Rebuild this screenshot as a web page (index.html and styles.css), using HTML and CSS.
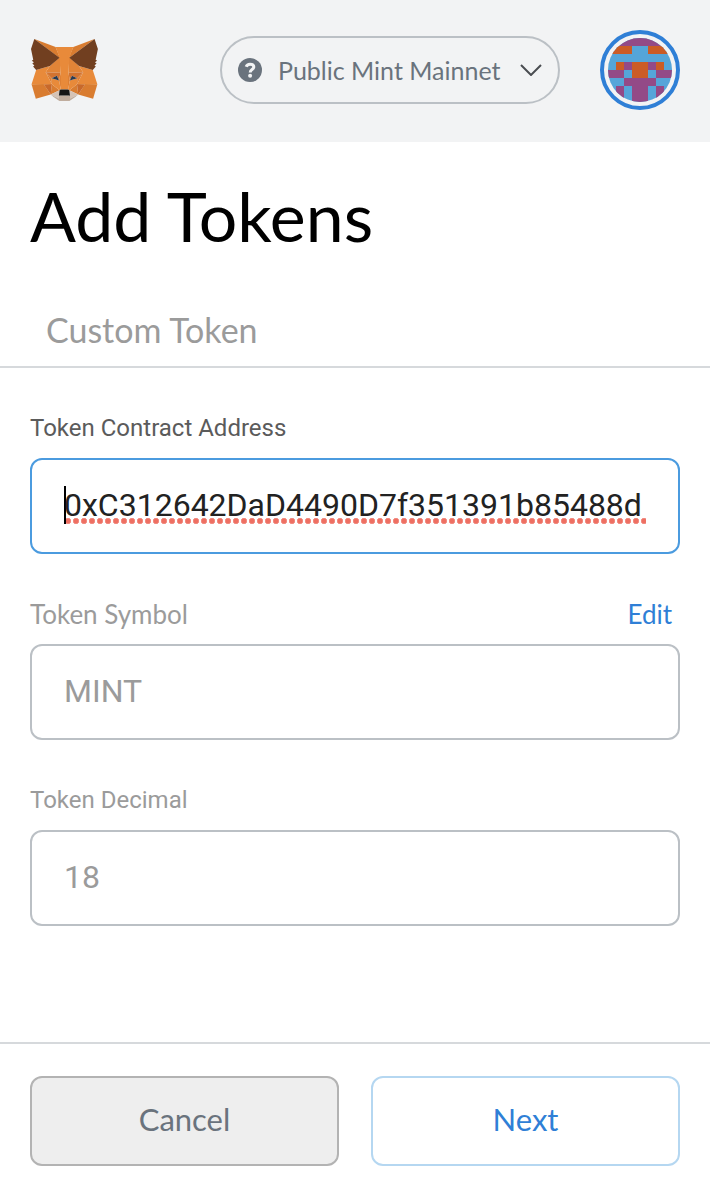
FILE: index.html
```html
<!DOCTYPE html>
<html lang="en">
<head>
  <meta charset="UTF-8">
  <meta name="viewport" content="width=device-width, initial-scale=1">
  <title>Add Tokens</title>
  <link rel="stylesheet" href="styles.css">
</head>
<body>

<!-- Header -->
<header class="app-header">
  <a class="logo" href="#" aria-label="Home">
    <svg viewBox="28 35.5 263 236.4" width="69" height="62">
      <polygon fill="#d97c30" points="274.1,35.5 174.6,109.4 193,65.8"/>
      <g fill="#d97c30">
        <polygon points="44.4,35.5 143.1,110.1 125.6,65.8"/>
        <polygon points="238.3,206.8 211.8,247.4 268.5,263 284.8,207.7"/>
        <polygon points="33.9,207.7 50.1,263 106.8,247.4 80.3,206.8"/>
        <polygon points="106.8,247.4 140.6,230.9 111.4,208.1"/>
        <polygon points="177.9,230.9 211.8,247.4 207.1,208.1"/>
      </g>
      <g fill="#e18437">
        <polygon points="103.6,138.2 87.8,162.1 144.1,164.6 142.1,104.1"/>
        <polygon points="214.9,138.2 175.9,103.4 174.6,164.6 230.8,162.1"/>
      </g>
      <g fill="#d5c3b6">
        <polygon points="211.8,247.4 177.9,230.9 180.6,253 180.3,262.3"/>
        <polygon points="106.8,247.4 138.3,262.3 138.1,253 140.6,230.9"/>
      </g>
      <g fill="#c8692b">
        <polygon points="106.8,247.4 111.6,206.8 80.3,207.7"/>
        <polygon points="207,206.8 211.8,247.4 238.3,207.7"/>
      </g>
      <g fill="#d27330">
        <polygon points="230.8,162.1 174.6,164.6 179.8,193.5 188.1,176.1 208.1,185.2"/>
        <polygon points="110.6,185.2 130.6,176.1 138.8,193.5 144.1,164.6 87.8,162.1"/>
      </g>
      <g fill="#dc7e33">
        <polygon points="87.8,162.1 111.4,208.1 110.6,185.2"/>
        <polygon points="208.1,185.2 207.1,208.1 230.8,162.1"/>
        <polygon points="144.1,164.6 138.8,193.5 145.4,227.6 146.9,182.7"/>
        <polygon points="174.6,164.6 171.9,182.6 173.1,227.6 179.8,193.5"/>
      </g>
      <g fill="#e88a3a">
        <polygon points="179.8,193.5 173.1,227.6 177.9,230.9 207.1,208.1 208.1,185.2"/>
        <polygon points="110.6,185.2 111.4,208.1 140.6,230.9 145.4,227.6 138.8,193.5"/>
        <polygon points="267.2,153.5 214.9,138.2 230.8,162.1 207.1,208.1 238.3,207.7 284.8,207.7"/>
        <polygon points="103.6,138.2 51.3,153.5 33.9,207.7 80.3,207.7 111.4,208.1 87.8,162.1"/>
        <polygon points="174.6,164.6 177.9,106.9 193.1,65.8 125.6,65.8 140.6,106.9 144.1,164.6 145.3,182.8 145.4,227.6 173.1,227.6 173.3,182.8"/>
      </g>
      <g fill="#2b3a4e">
        <polygon points="138.8,193.5 110.6,185.2 130.5,176.1"/>
        <polygon points="179.7,193.5 188,176.1 208,185.2"/>
      </g>
      <polygon fill="#c0ad9e" points="180.3,262.3 180.6,253 178.1,250.8 140.4,250.8 138.1,253 138.3,262.3 106.8,247.4 117.8,256.4 140.1,271.9 178.4,271.9 200.8,256.4 211.8,247.4"/>
      <polygon fill="#161616" points="177.9,230.9 173.1,227.6 145.4,227.6 140.6,230.9 138.1,253 140.4,250.8 178.1,250.8 180.6,253"/>
      <g fill="#713f20">
        <polygon points="278.3,114.2 286.8,73.4 274.1,35.5 177.9,106.9 214.9,138.2 267.2,153.5 278.8,140 273.8,136.4 281.8,129.1 275.6,124.3 283.6,118.2"/>
        <polygon points="31.8,73.4 40.3,114.2 34.9,118.2 42.9,124.3 36.8,129.1 44.8,136.4 39.8,140 51.3,153.5 103.6,138.2 140.6,106.9 44.4,35.5"/>
      </g>
    </svg>
  </a>

  <div class="network">
    <svg class="network-icon" viewBox="0 0 24 24" width="24" height="24">
      <circle cx="12" cy="12" r="12" fill="#6a737d"/>
      <path d="M8.2 8.800C8.800 7 10 6.200 12 6.200c2.300 0 3.800 1.100 3.800 2.900 0 2.500-3.600 2.500-3.600 5.300" fill="none" stroke="#f2f3f4" stroke-width="3"/>
      <circle cx="12.100" cy="17.800" r="2" fill="#f2f3f4"/>
    </svg>
    <select class="network-select" aria-label="Network">
      <option>Public Mint Mainnet</option>
    </select>
    <svg class="network-arrow" viewBox="0 0 22 12" width="22" height="12">
      <path d="M1 1l10 10L21 1" fill="none" stroke="#4a4d51" stroke-width="2"/>
    </svg>
  </div>

  <button class="account" type="button" aria-label="Account">
    <svg class="identicon" viewBox="0 0 8 8" width="64" height="64" shape-rendering="crispEdges">
      <rect width="8" height="8" fill="#55a5d9"/>
      <path fill="#934a87" d="M0 0h8v1H0zM2 3h1v1H2zM5 3h1v1H5zM0 4h2v1H0zM6 4h2v1H6zM2 5h4v1H2zM1 6h1v2H1zM3 6h2v2H3zM6 6h1v2H6z"/>
      <path fill="#cb5c26" d="M0 1h3v1H0zM5 1h3v1H5zM1 3h1v1H1zM3 3h2v2H3zM6 3h1v1H6z"/>
    </svg>
  </button>
</header>

<!-- Title and tabs -->
<div class="page-head">
  <h1>Add Tokens</h1>
  <div class="tabs">
    <button class="tab" type="button">Custom Token</button>
  </div>
</div>

<!-- Form -->
<form class="token-form" id="tokenForm">
  <div class="field">
    <div class="field-head">
      <label class="active" for="address">Token Contract Address</label>
    </div>
    <input class="focused" type="text" id="address" value="0xC312642DaD4490D7f351391b85488d" spellcheck="false">
  </div>

  <div class="field">
    <div class="field-head">
      <label class="brand" for="symbol">Token Symbol</label>
      <a class="edit" href="#">Edit</a>
    </div>
    <input type="text" id="symbol" value="MINT" disabled>
  </div>

  <div class="field">
    <div class="field-head">
      <label for="decimals">Token Decimal</label>
    </div>
    <input type="text" id="decimals" value="18" disabled>
  </div>
</form>

<!-- Footer -->
<footer class="page-footer">
  <button class="btn btn-cancel" type="button">Cancel</button>
  <button class="btn btn-next" type="submit" form="tokenForm">Next</button>
</footer>

</body>
</html>
```
FILE: styles.css
```css
* {
  box-sizing: border-box;
}
body {
  margin: 0;
  min-height: 100vh;
  display: flex;
  flex-direction: column;
  background: #fff;
  font-family: Lato, "Liberation Sans", sans-serif;
  font-size: 26px;
}
button, select, input {
  font: inherit;
}
svg {
  display: block;
}

/* header */
.app-header {
  display: flex;
  align-items: center;
  padding: 30px 30px 32px;
  background: #f2f3f4;
}
.logo {
  margin-right: auto;
}
.network {
  display: flex;
  align-items: center;
  width: 340px;
  height: 68px;
  margin-right: 40px;
  padding: 0 16px;
  border: 2px solid #bbc0c5;
  border-radius: 34px;
}
.network-icon {
  margin-right: 16px;
}
.network-select {
  flex: 1;
  min-width: 0;
  padding: 0;
  border: none;
  background: none;
  font-size: 25px;
  color: #6a737d;
  appearance: none;
  cursor: pointer;
}
.account {
  padding: 4px;
  border: 4px solid #2f7fd6;
  border-radius: 50%;
  background: none;
  cursor: pointer;
}
.identicon {
  border-radius: 50%;
}

/* title and tabs */
.page-head {
  padding-top: 34px;
  border-bottom: 2px solid #d6d9dc;
}
h1 {
  margin: 0 30px 38px;
  font-size: 68px;
  font-weight: 400;
  line-height: 80px;
  color: #000;
}
.tabs {
  display: flex;
  padding: 0 30px;
}
.tab {
  padding: 16px;
  border: none;
  background: none;
  font-size: 34px;
  line-height: 40px;
  color: #9b9b9b;
  cursor: pointer;
}

/* form */
.token-form {
  flex: 1;
  display: flex;
  flex-direction: column;
  gap: 46px;
  padding: 46px 30px;
}
.field-head {
  display: flex;
  justify-content: space-between;
  margin-bottom: 16px;
  line-height: 28px;
}
label {
  font-family: Roboto, sans-serif;
  font-size: 24px;
  color: #9b9b9b;
}
label.active {
  color: #5b5b5b;
}
label.brand {
  font-family: inherit;
  font-size: 26px;
}
.edit {
  margin-right: 8px;
  color: #2f7fd6;
  text-decoration: none;
}
.field input {
  display: block;
  width: 100%;
  height: 96px;
  padding: 26px 32px 28px;
  border: 2px solid #bbc0c5;
  border-radius: 12px;
  background: #fff;
  font-family: Roboto, sans-serif;
  font-size: 32px;
  color: #9b9b9b;
  outline: none;
}
/* caret and spelling dots under the address */
.field input.focused {
  border-color: #4b9bdf;
  color: #222;
  background-image:
    linear-gradient(#000, #000),
    radial-gradient(circle, #ee6f62 2px, #f3a098 3px, transparent 3px);
  background-size: 2px 38px, 8px 6px;
  background-position: left bottom;
  background-repeat: no-repeat, repeat-x;
  background-origin: content-box;
  background-clip: content-box;
}

/* footer */
.page-footer {
  display: flex;
  gap: 32px;
  padding: 32px 30px;
  border-top: 2px solid #d6d9dc;
}
.btn {
  flex: 1;
  height: 90px;
  padding: 0 0 4px;
  border: 2px solid;
  border-radius: 12px;
  font-size: 31px;
  cursor: pointer;
}
.btn-cancel {
  border-color: #b3b3b3;
  background: #eee;
  color: #6a737d;
}
.btn-next {
  border-color: #b5d7f1;
  background: #fff;
  color: #2f7fd6;
}
```
